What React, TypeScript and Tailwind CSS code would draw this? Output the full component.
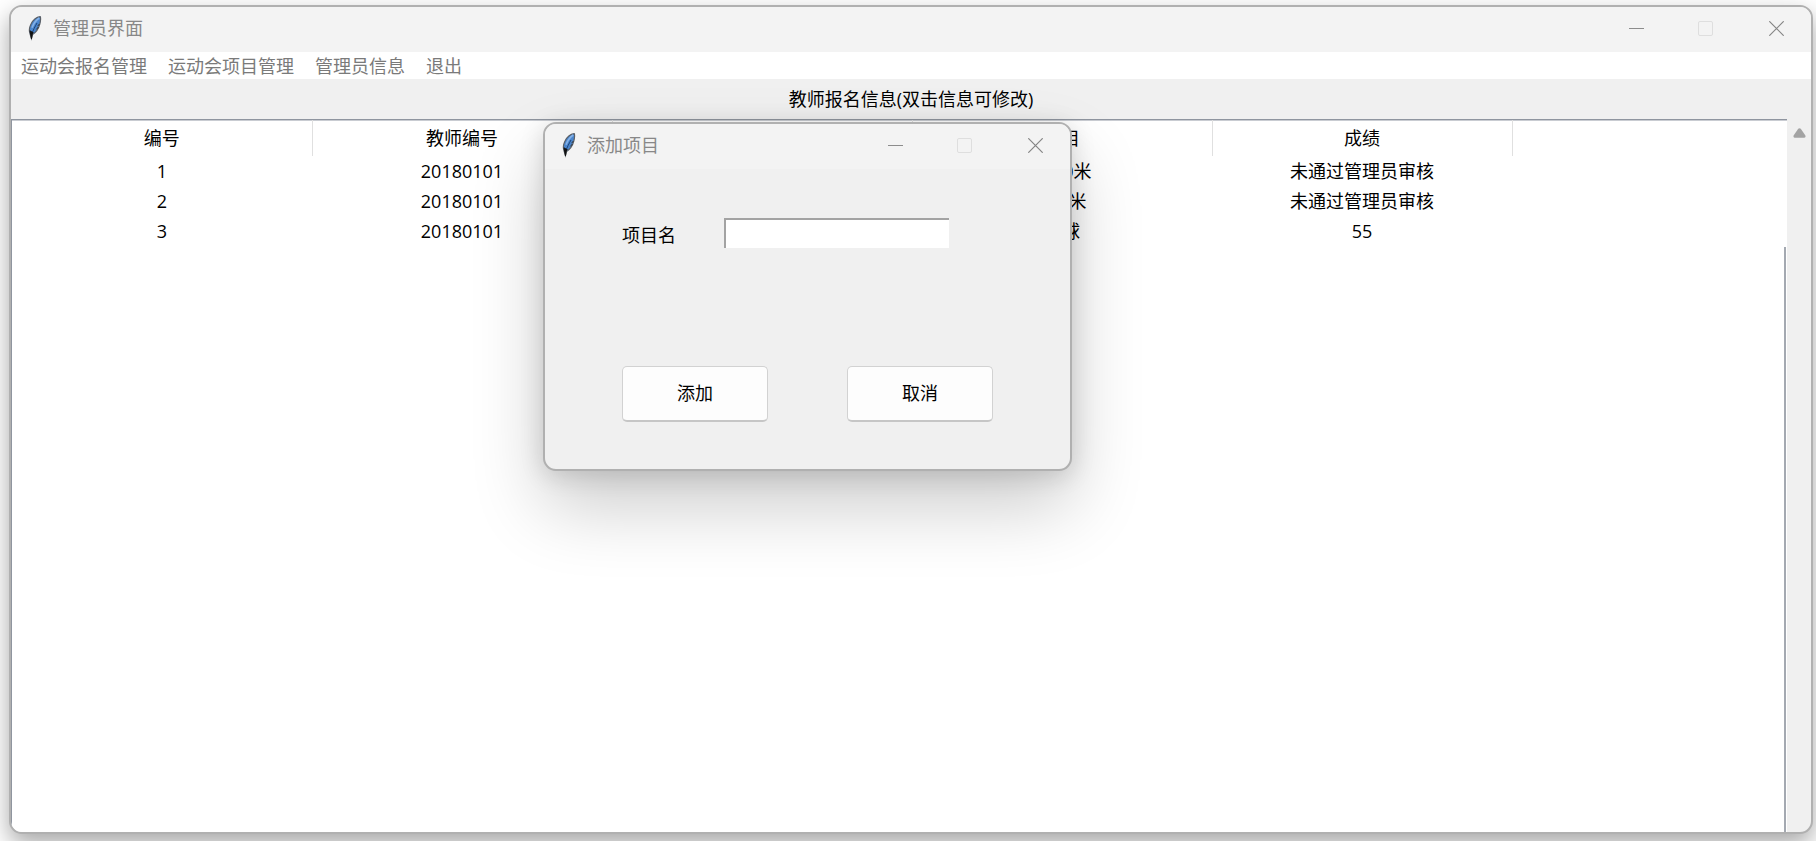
import React from "react";

const menus = ["运动会报名管理", "运动会项目管理", "管理员信息", "退出"];
const columns = ["编号", "教师编号", "", "项目", "成绩"];
const rows = [
  ["1", "20180101", "", "1500米", "未通过管理员审核"],
  ["2", "20180101", "", "100米", "未通过管理员审核"],
  ["3", "20180101", "", "篮球", "55"],
];

function Feather() {
  return (
    <svg width="16" height="26" viewBox="0 0 16 26" aria-hidden="true">
      <path
        d="M13.2 1.6C9.8 2 6 4.8 3.8 9.4C2.4 12.4 2 15.6 2.8 18L4.4 23.6L5.6 19.4C9 17.4 11.6 13.8 12.8 9.2C13.6 6 14 3.2 13.2 1.6Z"
        fill="#4a86cf"
        stroke="#5a6068"
        strokeWidth="1.2"
      />
      <path d="M12.2 3C9.2 5 6.6 8.4 5 12.8" fill="none" stroke="#86b2e6" strokeWidth="1.6" />
      <path d="M10 8C8 11.6 6 15.4 4.8 19" fill="none" stroke="#1d4274" strokeWidth="1" />
      <path d="M3 15.6L4.5 23.8L5.2 19L6.2 17" fill="#111" stroke="#111" strokeWidth="1" />
      <path d="M12.4 9L10.6 11.2M11.4 12L9.4 14.4" stroke="#333" strokeWidth="1" />
    </svg>
  );
}

function TitleBar({ title }: { title: string }) {
  return (
    <header className="flex h-[45px] shrink-0 items-stretch bg-[#f3f3f3] text-[#888]">
      <div className="flex flex-1 items-center gap-[10px] pb-1 pl-4">
        <Feather />
        <h1 className="leading-6">{title}</h1>
      </div>
      <button aria-label="最小化" className="flex w-[70px] items-center justify-center pb-[2px]">
        <svg width="15" height="15" viewBox="0 0 15 15">
          <path d="M0 7.5H15" stroke="#8c8c8c" />
        </svg>
      </button>
      <button aria-label="最大化" disabled className="flex w-[70px] items-center justify-center pb-[2px] pr-[2px]">
        <svg width="15" height="15" viewBox="0 0 15 15">
          <rect x=".5" y=".5" width="14" height="14" rx="1.5" fill="none" stroke="#dedede" />
        </svg>
      </button>
      <button aria-label="关闭" className="flex w-[70px] items-center justify-center pb-[2px]">
        <svg width="15" height="15" viewBox="0 0 15 15">
          <path d="M.3 .3L14.7 14.7M14.7 .3L.3 14.7" stroke="#858585" strokeWidth="1.2" />
        </svg>
      </button>
    </header>
  );
}

function AddDialog() {
  const button =
    "h-14 w-[146px] rounded-[5px] border border-[#d2d2d2] border-b-2 border-b-[#c6c6c6] bg-[#fdfdfd] text-black";
  return (
    <section
      role="dialog"
      aria-label="添加项目"
      className="absolute left-[543px] top-[122px] w-[529px] overflow-hidden rounded-[13px] border-2 border-[#b0b0b0] bg-[#f0f0f0] shadow-[0_36px_72px_rgba(0,0,0,0.2),0_4px_24px_rgba(0,0,0,0.14)]"
    >
      <TitleBar title="添加项目" />
      <form className="px-[77px] pb-[47px] pt-[49px]" onSubmit={(e) => e.preventDefault()}>
        <div className="flex items-center gap-12">
          <label htmlFor="project" className="pt-1 leading-6">
            项目名
          </label>
          <input
            id="project"
            className="h-[30px] w-[225px] border-l-2 border-t-2 border-[#a3a3a3] bg-white px-1 outline-none"
          />
        </div>
        <div className="mt-[118px] flex justify-between">
          <button type="submit" className={button}>
            添加
          </button>
          <button type="button" className={button}>
            取消
          </button>
        </div>
      </form>
    </section>
  );
}

export default function App() {
  return (
    <div className="relative flex min-h-screen bg-white pb-[7px] pl-[9px] pr-[3px] pt-[5px] font-['Open_Sans','Noto_Sans_CJK_SC',sans-serif] text-[18px] text-black">
      <main className="flex flex-1 flex-col overflow-hidden rounded-[13px] border-2 border-[#b0b0b0] bg-[#f0f0f0] shadow-[0_10px_24px_rgba(0,0,0,0.35)]">
        <TitleBar title="管理员界面" />
        <nav className="flex h-[27px] items-center gap-[21px] bg-white pl-[10px] leading-6 text-[#7a7a7a]">
          {menus.map((m) => (
            <button key={m}>{m}</button>
          ))}
        </nav>
        <h2 className="flex h-10 items-center justify-center leading-6">教师报名信息(双击信息可修改)</h2>
        <div className="flex flex-1">
          <div className="flex flex-1 flex-col border-l border-[#8f959f] bg-white">
            <div className="h-32 border-t border-[#8f959f] shadow-[inset_0_1px_0_#c9ccd2]">
              <table className="w-full table-fixed text-center leading-6">
                <colgroup>
                  {columns.map((_, i) => (
                    <col key={i} className="w-[300px]" />
                  ))}
                  <col />
                </colgroup>
                <thead>
                  <tr className="h-9">
                    {columns.map((c, i) => (
                      <th key={i} className="border-r border-[#e0e0e0] p-0 font-normal">
                        {c}
                      </th>
                    ))}
                    <th className="p-0" />
                  </tr>
                </thead>
                <tbody>
                  {rows.map((r) => (
                    <tr key={r[0]} className="h-[30px]">
                      {r.map((v, i) => (
                        <td key={i} className="p-0">
                          {v}
                        </td>
                      ))}
                      <td className="p-0" />
                    </tr>
                  ))}
                </tbody>
              </table>
            </div>
            <div className="mr-px flex-1 border-r-2 border-[#a4a9b1]" />
          </div>
          <div className="flex w-6 justify-center pt-[9px]">
            <svg width="13" height="10" viewBox="0 0 13 10" aria-hidden="true">
              <path d="M5.2 .8Q6.5 -.4 7.8 .8L12.4 7.6Q13 9.6 11.4 9.7H1.6Q0 9.6 .6 7.6Z" fill="#a3a3a3" />
            </svg>
          </div>
        </div>
      </main>
      <AddDialog />
    </div>
  );
}
